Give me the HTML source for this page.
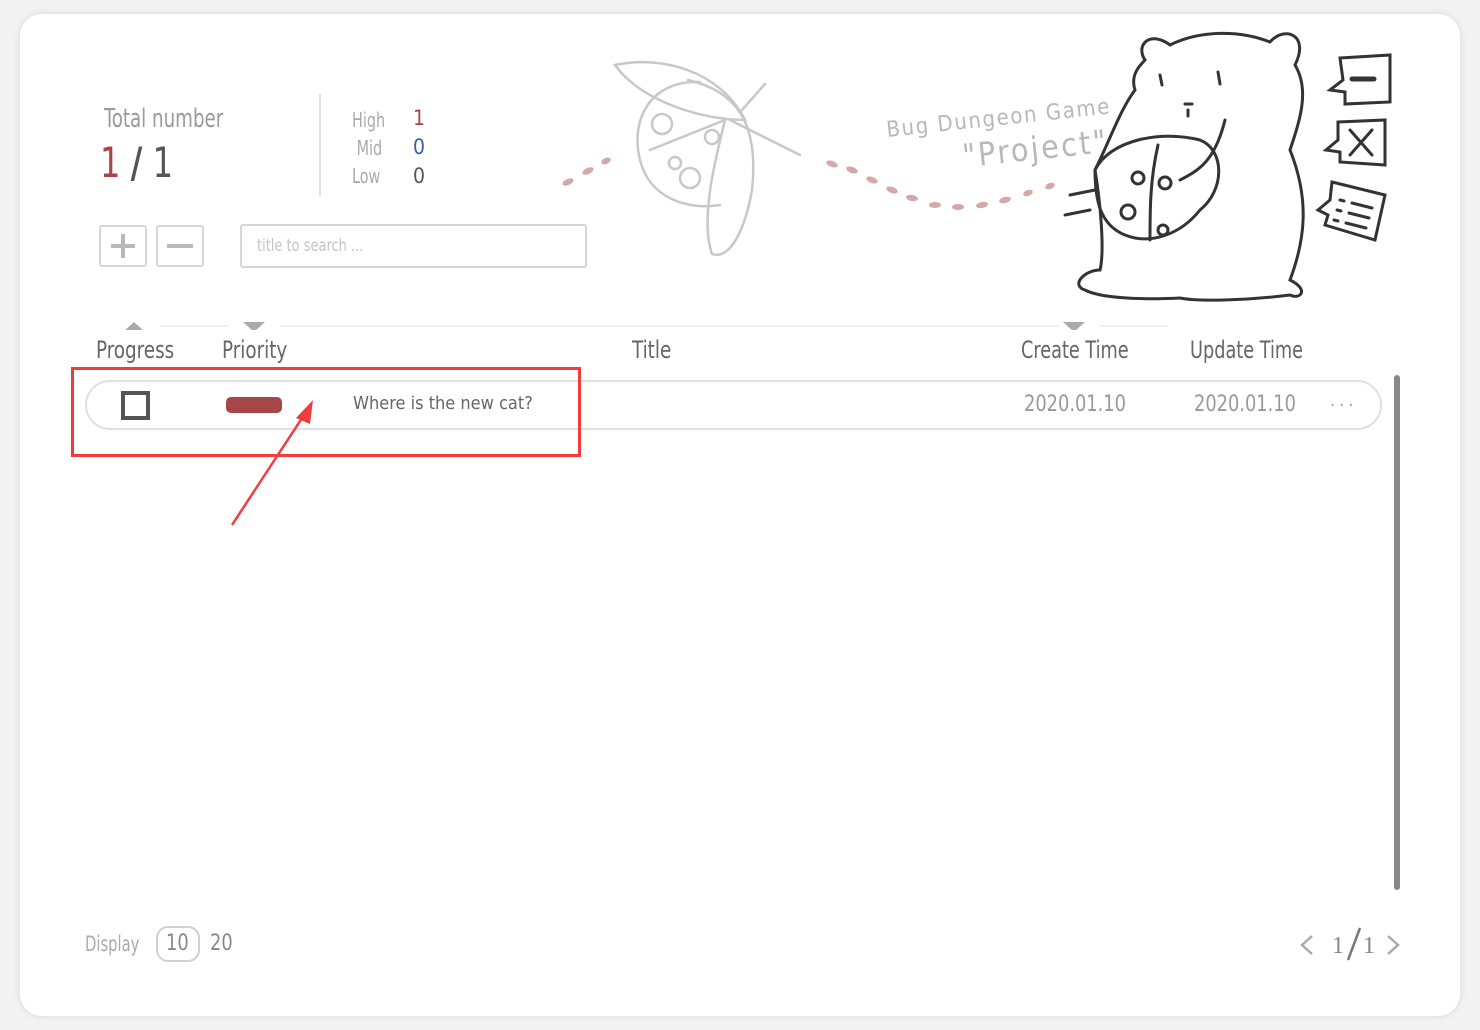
<!DOCTYPE html>
<html><head><meta charset="utf-8"><style>
*{margin:0;padding:0;box-sizing:border-box}
body{width:1480px;height:1030px;background:#f3f3f3;position:relative;overflow:hidden;font-family:"DejaVu Sans Condensed","Liberation Sans Narrow","DejaVu Sans",sans-serif;}
.card{position:absolute;left:20px;top:14px;width:1440px;height:1002px;background:#fff;border-radius:22px;box-shadow:0 0 8px rgba(0,0,0,.12)}
.a{position:absolute;white-space:nowrap;transform-origin:0 0}
</style></head><body>
<div class="card"></div>
<div class="a" style="left:104px;top:104px;font-size:26px;color:#9a9a9a;transform:scaleX(.78)">Total number</div>
<div class="a" style="left:100px;top:138px;font-size:42px;color:#555;transform:scaleX(.85)"><span style="color:#a44">1</span> <b>/</b> 1</div>
<div class="a" style="left:319px;top:94px;width:2px;height:102px;background:#e2e2e2"></div>
<div class="a" style="left:352px;top:106px;font-size:20px;color:#aaa;line-height:28px;transform:scaleX(.8)">High<br>&nbsp;Mid<br>Low</div>
<div class="a" style="left:413px;top:104px;font-size:21px;line-height:29px;color:#a44">1<br><span style="color:#3a5fa8">0</span><br><span style="color:#555">0</span></div>
<div class="a" style="left:99px;top:225px;width:48px;height:42px;border:2px solid #d6d6d6;border-radius:3px"></div>
<div class="a" style="left:111px;top:244px;width:24px;height:4px;background:#b8b8b8"></div>
<div class="a" style="left:121px;top:234px;width:4px;height:24px;background:#b8b8b8"></div>
<div class="a" style="left:156px;top:225px;width:48px;height:42px;border:2px solid #d6d6d6;border-radius:3px"></div>
<div class="a" style="left:167px;top:244px;width:26px;height:4px;background:#b8b8b8"></div>
<div class="a" style="left:240px;top:224px;width:347px;height:44px;border:2px solid #d6d6d6;border-radius:3px"></div>
<div class="a" style="left:257px;top:236px;font-size:17px;color:#c4c4c4;transform:scaleX(.85)">title to search ...</div>

<svg class="a" style="left:0;top:0" width="1480" height="330">
<g fill="#d4a8a8">
<ellipse cx="568" cy="182" rx="6" ry="3" transform="rotate(-25 568 182)"/><ellipse cx="588" cy="171" rx="6" ry="3" transform="rotate(-25 588 171)"/><ellipse cx="606" cy="161" rx="5" ry="3" transform="rotate(-25 606 161)"/>
<ellipse cx="832" cy="164" rx="6" ry="3" transform="rotate(20 832 164)"/><ellipse cx="852" cy="170" rx="6" ry="3" transform="rotate(20 852 170)"/><ellipse cx="872" cy="180" rx="6" ry="3" transform="rotate(20 872 180)"/><ellipse cx="892" cy="190" rx="6" ry="3" transform="rotate(20 892 190)"/><ellipse cx="912" cy="198" rx="6" ry="3" transform="rotate(10 912 198)"/><ellipse cx="935" cy="205" rx="6" ry="3"/><ellipse cx="958" cy="207" rx="6" ry="3"/><ellipse cx="982" cy="205" rx="6" ry="3" transform="rotate(-10 982 205)"/><ellipse cx="1005" cy="200" rx="6" ry="3" transform="rotate(-15 1005 200)"/><ellipse cx="1028" cy="193" rx="5" ry="3" transform="rotate(-20 1028 193)"/><ellipse cx="1050" cy="186" rx="5" ry="3" transform="rotate(-20 1050 186)"/>
</g>
<g fill="none" stroke="#c8c8c8" stroke-width="2.5" stroke-linecap="round">
<path d="M700 82 C650 80 630 120 640 160 C650 200 690 210 720 205"/>
<path d="M615 65 C660 55 720 70 745 120 C700 120 640 100 615 65Z"/>
<path d="M688 80 C730 90 760 115 752 190 C745 230 730 260 712 254 C700 220 715 160 725 120"/>
<path d="M650 150 L725 120 M730 120 L800 155 M742 110 L765 84"/>
<circle cx="662" cy="124" r="10"/><circle cx="690" cy="178" r="10"/><circle cx="675" cy="163" r="6"/><circle cx="712" cy="137" r="7"/>
</g>
<g transform="rotate(-6 1000 110)" fill="#b8b8b8" font-size="22" font-family="DejaVu Sans Condensed,sans-serif" letter-spacing="1">
<text x="885" y="125" textLength="225">Bug Dungeon Game</text>
<text x="958" y="163" font-size="32" textLength="145">"Project"</text>
</g>
<g fill="none" stroke="#333" stroke-width="3" stroke-linecap="round">
<path d="M1145 60 C1135 45 1150 30 1170 45 C1200 30 1240 30 1270 42 C1285 25 1310 35 1295 65 C1310 90 1300 120 1290 150 C1310 200 1305 240 1290 280 C1310 290 1300 300 1290 295 C1250 300 1200 302 1180 298 C1140 300 1100 298 1085 290 C1070 285 1085 270 1100 270 C1105 250 1100 200 1095 170 C1110 140 1120 110 1135 90 C1130 75 1140 65 1145 60Z"/>
<path d="M1160 75 L1162 85 M1218 72 L1220 84 M1185 104 L1192 104 M1188 110 L1188 116"/>
<path d="M1095 170 C1110 140 1160 130 1200 140 C1225 150 1225 190 1200 210 C1180 235 1150 245 1125 235 C1100 225 1095 200 1095 170Z"/>
<path d="M1158 145 C1150 180 1150 210 1150 240 M1180 180 C1200 170 1215 160 1225 120 M1065 215 L1090 210 M1070 195 L1095 190"/>
<circle cx="1138" cy="178" r="6"/><circle cx="1165" cy="183" r="6"/><circle cx="1128" cy="212" r="7"/><circle cx="1163" cy="230" r="5"/>
<path d="M1340 58 L1390 55 L1390 102 L1345 104 L1345 92 L1330 90 L1343 80Z"/><path d="M1352 79 L1374 79" stroke-width="5"/>
<path d="M1338 122 L1385 120 L1385 165 L1340 162 L1340 152 L1326 150 L1338 140Z"/><path d="M1350 130 L1372 155 M1372 130 L1350 155"/>
<path d="M1332 182 L1385 195 L1375 240 L1325 225 L1328 215 L1318 210 L1330 200Z"/><path d="M1340 200 L1344 201 M1352 203 L1372 208 M1337 210 L1341 211 M1349 213 L1369 218 M1334 220 L1338 221 M1346 223 L1366 228"/>
</g>
<g fill="#aaa"><path d="M123 332 L134 322 L145 332Z"/><path d="M243 322 L265 322 L254 332Z"/><path d="M1063 322 L1085 322 L1074 332Z"/></g>
<path d="M160 326 H228 M280 326 H1060 M1100 326 H1168" stroke="#f0f0f0" stroke-width="2"/>
</svg>

<div class="a" style="left:96px;top:336px;font-size:24px;color:#666;transform:scaleX(.85)">Progress</div>
<div class="a" style="left:222px;top:336px;font-size:24px;color:#666;transform:scaleX(.85)">Priority</div>
<div class="a" style="left:632px;top:336px;font-size:24px;color:#666;transform:scaleX(.85)">Title</div>
<div class="a" style="left:1021px;top:336px;font-size:24px;color:#666;transform:scaleX(.82)">Create Time</div>
<div class="a" style="left:1190px;top:336px;font-size:24px;color:#666;transform:scaleX(.82)">Update Time</div>

<div class="a" style="left:85px;top:380px;width:1297px;height:50px;border:2px solid #e0e0e0;border-radius:25px"></div>
<div class="a" style="left:121px;top:391px;width:29px;height:29px;border:4px solid #555"></div>
<div class="a" style="left:226px;top:397px;width:56px;height:16px;background:#a64646;border-radius:5px"></div>
<div class="a" style="left:353px;top:393px;font-size:18px;color:#666">Where is the new cat?</div>
<div class="a" style="left:1024px;top:392px;font-size:22px;color:#999;transform:scaleX(.9)">2020.01.10</div>
<div class="a" style="left:1194px;top:392px;font-size:22px;color:#999;transform:scaleX(.9)">2020.01.10</div>
<div class="a" style="left:1330px;top:395px;font-size:18px;color:#999;letter-spacing:4px">···</div>
<div class="a" style="left:1394px;top:375px;width:6px;height:515px;background:#888;border-radius:3px"></div>

<div class="a" style="left:71px;top:367px;width:510px;height:90px;border:3px solid #f03c3c"></div>
<svg class="a" style="left:0;top:0" width="400" height="540"><path d="M232 525 L306 412" stroke="#f03c3c" stroke-width="2.5"/><path d="M313 400 L296 418 L310 424Z" fill="#f03c3c"/></svg>

<div class="a" style="left:85px;top:932px;font-size:21px;color:#aaa;transform:scaleX(.78)">Display</div>
<div class="a" style="left:156px;top:926px;width:44px;height:36px;border:2px solid #d0d0d0;border-radius:12px"></div>
<div class="a" style="left:166px;top:931px;font-size:22px;color:#888;transform:scaleX(.9)">10</div>
<div class="a" style="left:210px;top:931px;font-size:22px;color:#888;transform:scaleX(.9)">20</div>
<svg class="a" style="left:1296px;top:922px" width="112" height="44">
<path d="M16 14 L6 23 L16 32 M92 14 L102 23 L92 32" fill="none" stroke="#aaa" stroke-width="2.5"/>
<path d="M64 6 L52 38" stroke="#777" stroke-width="2.5"/>
<text x="36" y="31" font-size="24" fill="#888" font-family="Liberation Serif,serif">1</text>
<text x="67" y="31" font-size="24" fill="#888" font-family="Liberation Serif,serif">1</text>
</svg>
</body></html>
